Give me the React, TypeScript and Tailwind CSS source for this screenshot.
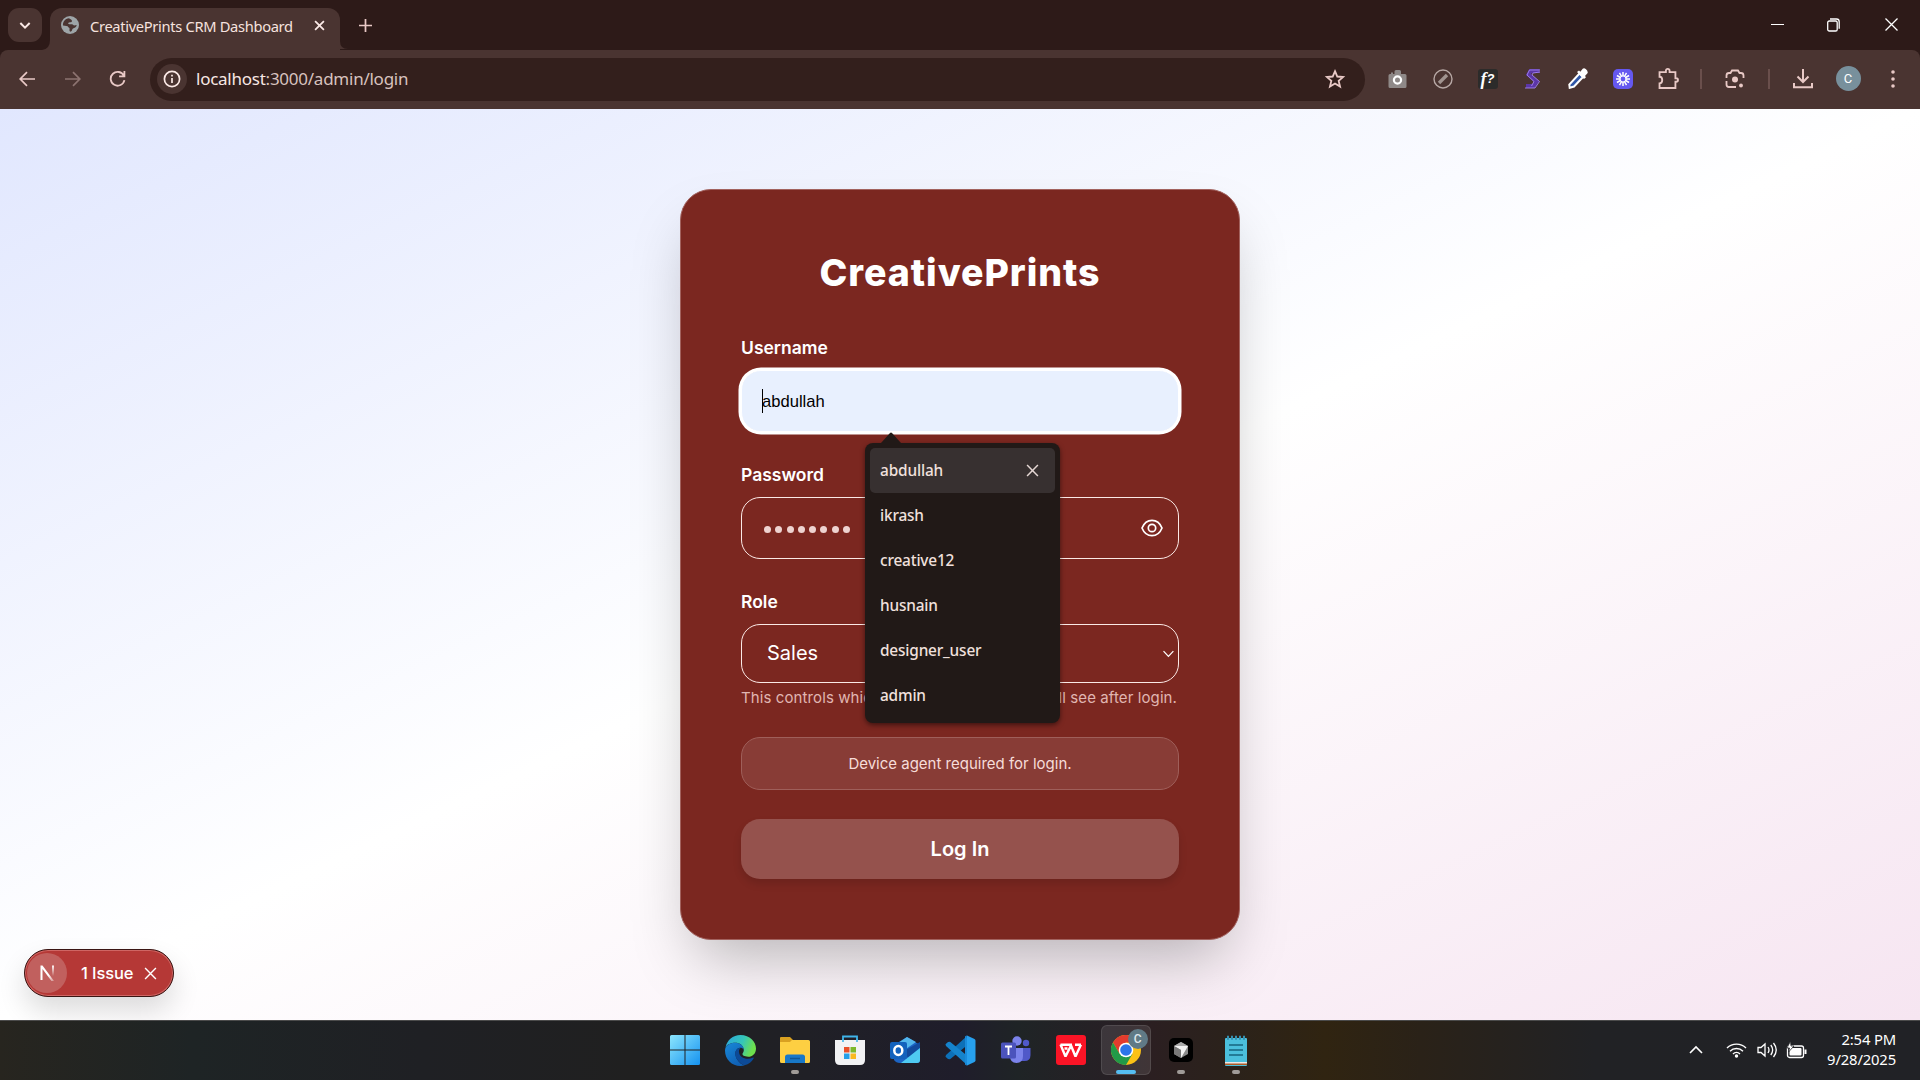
import React from "react";

const ui = "font-['Noto_Sans','Open_Sans',sans-serif]";

function Line({ d, size = 20, sw = 2, color = "#e9c9c6", vb = "0 0 24 24" }: { d: string; size?: number; sw?: number; color?: string; vb?: string }) {
  return (
    <svg width={size} height={size} viewBox={vb} fill="none" stroke={color} strokeWidth={sw} className="block shrink-0">
      <path d={d} />
    </svg>
  );
}

function Cell({ w, children }: { w: string; children?: React.ReactNode }) {
  return <div className={`flex h-full shrink-0 items-center justify-center ${w}`}>{children}</div>;
}

function TabStrip() {
  return (
    <div className="flex h-[50px] items-start bg-[#2d1a18]">
      <div className="ml-2 mt-2 flex h-[34px] w-[34px] items-center justify-center rounded-[11px] bg-[#4a3431]">
        <Line d="M5 9l7 7 7-7" size={16} sw={3} color="#fbe9e6" />
      </div>
      <div className="mt-2 flex h-[42px] w-2 items-end">
        <svg width="8" height="10" viewBox="0 0 8 10" className="block"><path d="M8 0v10H0Q8 9 8 0z" fill="#4a3431" /></svg>
      </div>
      <div className="mt-2 flex h-[42px] w-[290px] items-center rounded-t-[12px] bg-[#4a3431] pl-[11px]">
        <svg width="18" height="18" viewBox="0 0 18 18" className="-mt-2 block shrink-0">
          <circle cx="9" cy="9" r="9" fill="#9ea5a8" />
          <path d="M8 2.2C4 2.5 1.600 6 2 9.500l3.500.5c2 0 1.500 1.700 3 2v2.500c0 1 1 1.400 1.500 1 1.500-1 1-2.500 2-3 1.200-.5 3.500-1 3.700-3.500L13 9.500c-1-1-2-1.500-4-1.200C7 8.500 6.500 7 8 6.500s3 0 3-1.500S9.500 3.500 8 2.200z" fill="#4a3431" />
        </svg>
        <span className={`${ui} ml-[11px] mt-[-7px] w-[218px] shrink-0 whitespace-nowrap text-[14.700px] leading-5 tracking-[-0.33px] text-[#f6e2df]`}>CreativePrints CRM Dashboard</span>
        <div className="-mt-2 ml-[6px]"><Line d="M1 1l8 8M9 1l-8 8" size={11} vb="0 0 10 10" sw={1.6} color="#fbe9e6" /></div>
      </div>
      <div className="flex h-[42px] w-2 items-end self-end">
        <svg width="10" height="10" viewBox="0 0 10 10" className="block"><path d="M0 0v10H10Q0 10 0 0z" fill="#4a3431" /></svg>
      </div>
      <div className="ml-[11px] mt-[19px]"><Line d="M6 0v12M0 6h12" size={13} vb="0 0 12 12" sw={1.6} /></div>
      <div className="ml-auto flex h-[49px]">
        <Cell w="w-14"><div className="h-px w-[13px] bg-white" /></Cell>
        <Cell w="w-[57px]">
          <svg width="13" height="14" viewBox="0 0 13 14" fill="none" stroke="#fff" strokeWidth="1.300" className="block"><rect x=".7" y="3" width="9.500" height="10" rx="1.600" /><path d="M3 1h6.500a2.700 2.700 0 0 1 2.700 2.700v7" /></svg>
        </Cell>
        <Cell w="w-[58px]"><Line d="M.5 .5l12 12M12.500 .5l-12 12" size={13} vb="0 0 13 13" sw={1.3} color="#fff" /></Cell>
      </div>
    </div>
  );
}

function Toolbar() {
  return (
    <div className="bg-[#2d1a18]">
      <div className="flex h-[59px] items-center rounded-t-[8px] bg-[#4a3431] pb-px">
        <div className="flex h-full w-[150px] shrink-0 items-center pb-px pl-1">
          <Cell w="w-[46px]"><Line d="M16 8H1.500M8 1.200L1.200 8 8 14.800" size={16} vb="0 0 16 16" sw={1.7} /></Cell>
          <Cell w="w-[45px]"><Line d="M0 8h14.500M8 1.200L14.800 8 8 14.800" size={16} vb="0 0 16 16" sw={1.7} color="#8c7370" /></Cell>
          <Cell w="w-[45px]"><Line d="M14 5.500A6.500 6.500 0 1 0 14.500 9.500M14.500 1v5H9.500" size={17} vb="0 0 16 16" sw={1.7} /></Cell>
        </div>
        <div className="flex h-[43px] w-[1215px] shrink-0 items-center rounded-full bg-[#331f1c] pb-px pl-[7px]">
          <div className="flex h-[30px] w-[30px] items-center justify-center rounded-full bg-[#4a3431]">
            <svg width="18" height="18" viewBox="0 0 18 18" fill="none" className="block"><circle cx="9" cy="9" r="7.600" stroke="#fbe9e6" strokeWidth="1.700" /><path d="M9 8v5M9 4.700v1.800" stroke="#fbe9e6" strokeWidth="1.700" /></svg>
          </div>
          <span className={`${ui} ml-[9px] whitespace-nowrap text-[17px] tracking-[-0.25px] text-[#d8c2bf]`}><span className="text-[#f8e7e4]">localhost</span>:3000/admin/login</span>
          <div className="ml-auto mr-[19px]"><Line d="M12 3.500l2.500 5.800 6.300.6-4.800 4.200 1.500 6.200L12 17 6.500 20.300 8 14.100 3.200 9.900l6.300-.6z" size={22} sw={2} /></div>
        </div>
        <div className="ml-[9px] flex h-full items-center pb-px">
          <Cell w="w-[46px]">
            <svg width="19" height="20" viewBox="0 0 19 20" className="block"><path d="M2 5h1V3.500h2V5h1.500V2.500Q6.500 1 8 1h3.500Q13 1 13 2.500V5h4q1.500 0 1.500 1.500v11Q18.500 19 17 19H2Q.5 19 .5 17.500v-11Q.5 5 2 5z" fill="#8f8988" /><circle cx="9.500" cy="11" r="3.600" fill="none" stroke="#fff" strokeWidth="2.200" /></svg>
          </Cell>
          <Cell w="w-[45px]">
            <svg width="20" height="20" viewBox="0 0 20 20" className="block"><circle cx="10" cy="10" r="9" fill="none" stroke="#b7a8a5" strokeWidth="1.400" /><path d="M6 14L14 6" stroke="#a19490" strokeWidth="3.300" /></svg>
          </Cell>
          <Cell w="w-[45px]">
            <span className="flex h-[20px] w-[20px] items-center justify-center rounded-[3px] bg-[#2c2b2a] font-['Liberation_Serif',serif] text-[18px] font-bold italic leading-none text-white">f<span className="font-['Liberation_Sans',sans-serif] text-[13px]">?</span></span>
          </Cell>
          <Cell w="w-[45px]">
            <svg width="18" height="20" viewBox="0 0 18 20" fill="none" className="block"><path d="M15.500 2H6.500L4.500 5.500l8 7-3 4.500H2" stroke="#5b36a8" strokeWidth="4" /><path d="M16 1H5.500L3 6l7 6.500L7.500 17M16 3L9 4l-1 2 7.500 6.500L11 19H1" stroke="#a483ee" strokeWidth=".9" /></svg>
          </Cell>
          <Cell w="w-[45px]">
            <svg width="20" height="21" viewBox="0 0 20 21" className="block"><path d="M11.500 5.500L15 9 6 18.500l-4.300 1.300L1.300 16.500z" fill="#2f57a8" stroke="#fff" strokeWidth="2" /><path d="M9 4l7 7 2-1.700-1-1.300 2.700-3Q20 3 18 1.200T14.700.8L12.300 3.800 11 2.500z" fill="#fff" /></svg>
          </Cell>
          <Cell w="w-[45px]">
            <span className="flex h-5 w-5 items-center justify-center rounded-[5px] bg-[#6558f0]">
              <svg width="16" height="16" viewBox="-8 -8 16 16" className="block">
                {[0, 30, 60, 90, 120, 150, 180, 210, 240, 270, 300, 330].map((a) => <path key={a} d="M0-3v-4" stroke="#fff" strokeWidth="1.500" transform={`rotate(${a})`} />)}
                <circle r="3" fill="none" stroke="#fff" strokeWidth="1.200" />
              </svg>
            </span>
          </Cell>
          <Cell w="w-[46px]"><Line d="M1.500 3.500h6.200V2.200a1.800 1.800 0 0 1 3.600 0V3.500H17v6h.8a1.700 1.700 0 0 1 0 3.400H17V19H1.500v-4.500c3.500 0 3.500-6.500 0-6.500z" size={21} vb="0 -.5 20.500 20.500" sw={1.8} /></Cell>
          <Cell w="w-[19px]"><div className="h-5 w-[2px] bg-[#6a4f4c]" /></Cell>
          <Cell w="w-[50px]">
            <svg width="20" height="20" viewBox="0 0 20 20" fill="none" stroke="#e9c9c6" strokeWidth="1.800" className="block"><path d="M1.500 9V6.500q0-2.500 2.500-2.500h1.500L7 1.500h6L14.500 4H16q2.500 0 2.500 2.500V9M1.500 12v3.500Q1.500 18 4 18h7" /><circle cx="10" cy="10.500" r="3" fill="#e9c9c6" stroke="none" /><circle cx="16" cy="16.500" r="1.900" fill="#e9c9c6" stroke="none" /></svg>
          </Cell>
          <Cell w="w-[18px]"><div className="h-5 w-[2px] bg-[#6a4f4c]" /></Cell>
          <Cell w="w-[50px]"><Line d="M10 0v12.500M4.500 7.500L10 13l5.500-5.500M1 14v4.200h18V14" size={20} vb="0 0 20 20" sw={2} /></Cell>
          <Cell w="w-[40px]"><span className="flex h-[25px] w-[25px] items-center justify-center rounded-full bg-[#78909c] font-[Roboto,sans-serif] text-[13px] text-white">C</span></Cell>
          <Cell w="w-[50px]">
            <svg width="4" height="20" viewBox="0 0 4 20" fill="#e9c9c6" className="block"><circle cx="2" cy="3" r="1.800" /><circle cx="2" cy="10" r="1.800" /><circle cx="2" cy="17" r="1.800" /></svg>
          </Cell>
        </div>
      </div>
    </div>
  );
}

const suggestions = ["ikrash", "creative12", "husnain", "designer_user", "admin"];

function SuggestionPopup() {
  return (
    <div className={`${ui} absolute left-[123px] top-[61px] z-10 w-[195px]`}>
      <svg width="20" height="11" viewBox="0 0 20 11" className="ml-4 block"><path d="M0 11L9 1q1-1 2 0l9 10z" fill="#211917" /></svg>
      <div className="h-[280px] rounded-[8px] bg-[#211917] px-[5px] pt-[5px] text-[15.400px] font-medium text-[#f0e0dd] shadow-[0_2px_5px_rgba(0,0,0,0.5)]">
        <div className="flex h-[45px] items-center justify-between rounded-[5px] bg-[#373030] pl-[10px] pr-[16px]">
          <span className="tracking-[-0.15px]">abdullah</span>
          <Line d="M1 1l10 10M11 1L1 11" size={13} vb="0 0 12 12" sw={1.4} color="#e4d6d3" />
        </div>
        {suggestions.map((s) => (
          <div key={s} className="flex h-[45px] items-center pl-[10px] pt-px tracking-[-0.18px]">{s}</div>
        ))}
      </div>
    </div>
  );
}

function LoginCard() {
  return (
    <div className="flex h-[751px] w-[560px] flex-col rounded-[31px] border border-[#a2625e] bg-[#7b2720] px-[60px] pt-[60px] font-[Inter,sans-serif] text-white shadow-[0_31px_62px_-15px_rgba(0,0,0,0.28)]">
      <h1 className="h-[45px] text-center text-[37.500px] font-extrabold leading-[45px] tracking-[0.94px]">CreativePrints</h1>
      <label className="mt-[40px] h-[25px] text-[17.500px] font-semibold leading-[25px]">Username</label>
      <div className="relative mt-[10px] flex h-[62px] items-center rounded-[20px] border border-white bg-[#e8f0fe] pl-[20px] shadow-[0_0_0_2.500px_#fff]">
        <div className="h-6 w-px bg-black" />
        <span className="-ml-px mt-[3px] font-['Liberation_Sans',sans-serif] text-[16.600px] text-black">abdullah</span>
        <SuggestionPopup />
      </div>
      <label className="mt-[30px] h-[25px] text-[17.500px] font-semibold leading-[25px]">Password</label>
      <div className="mt-[10px] flex h-[62px] items-center rounded-[19px] border border-[#fbe9e6] pl-[22px] pr-[15px]">
        <div className="mt-[3px] flex gap-[4.300px]">
          {[0, 1, 2, 3, 4, 5, 6, 7].map((i) => <span key={i} className="h-[7px] w-[7px] rounded-full bg-[#eed3d0]" />)}
        </div>
        <svg width="22" height="20" viewBox="0 0 22 20" fill="none" stroke="#fff" strokeWidth="1.700" className="ml-auto block"><path d="M1 10C3 5 6.500 2.300 11 2.300S19 5 21 10c-2 5-5.500 7.700-10 7.700S3 15 1 10z" /><circle cx="11" cy="10" r="3.700" /></svg>
      </div>
      <label className="mt-[30px] h-[25px] text-[17.500px] font-semibold leading-[25px]">Role</label>
      <div className="mt-[10px] flex h-[59px] items-center rounded-[19px] border border-b-[1.500px] border-[#fbe9e6] pb-px pl-[25px] pr-[4px] text-[20px]">
        Sales
        <div className="ml-auto"><Line d="M.5 1l4.700 5 4.700-5" size={11} vb="0 -2 10.500 10.500" sw={1.2} color="#fff" /></div>
      </div>
      <p className="mt-[5px] flex h-5 w-[436px] justify-between whitespace-nowrap text-[15px] leading-5 tracking-[0.1px] text-[#e0b6b2]">
        <span>This controls which dashboard section</span>
        <span>you&rsquo;ll see after login.</span>
      </p>
      <div className="mt-[29px] flex h-[53px] items-center justify-center rounded-[19px] border border-[#9f5f5a] bg-[#883c36] pt-px text-[15px] text-[#f6dcd9]">Device agent required for login.</div>
      <button className="mt-[29px] flex h-[60px] items-center justify-center rounded-[19px] bg-[#95524d] text-[20px] font-semibold shadow-[0_5px_8px_rgba(0,0,0,0.12)]">Log In</button>
    </div>
  );
}

function IssueBadge() {
  return (
    <div className="absolute left-6 top-[840px] flex h-12 w-[150px] items-center rounded-full border-[1.500px] border-[#3a1513] bg-[#b53836] pl-[2px] shadow-[inset_0_0_0_1px_#cf6664,0_14px_28px_rgba(0,0,0,0.14)]">
      <span className="flex h-10 w-10 items-center justify-center rounded-full bg-[#c1605e]">
        <svg width="18" height="18" viewBox="0 0 18 18" fill="none" className="block">
          <defs>
            <linearGradient id="nd" x1="0" y1="0" x2="1" y2="1"><stop offset=".6" stopColor="#fff" /><stop offset="1" stopColor="#fff" stopOpacity=".3" /></linearGradient>
            <linearGradient id="nv" gradientUnits="userSpaceOnUse" x1="0" y1="1" x2="0" y2="12"><stop stopColor="#fff" /><stop offset="1" stopColor="#fff" stopOpacity="0" /></linearGradient>
          </defs>
          <path d="M2.500 16V1.500h2L16 17h-2.500L4.500 5v11z" fill="url(#nd)" />
          <path d="M14 1.500h2v10.500h-2z" fill="url(#nv)" />
        </svg>
      </span>
      <span className="ml-[14px] w-[63px] whitespace-nowrap font-[Inter,sans-serif] text-[16.500px] font-medium tracking-[-0.1px] text-white">1 Issue</span>
      <Line d="M1 1l10 10M11 1L1 11" size={13} vb="0 0 12 12" sw={1.3} color="#fff" />
    </div>
  );
}

function TaskItem({ children, pill, active }: { children: React.ReactNode; pill?: boolean; active?: boolean }) {
  return (
    <div className={`relative flex h-[50px] w-[50px] items-center justify-center rounded-[6px] ${active ? "border border-white/10 bg-white/10" : ""}`}>
      {children}
      {pill && <span className="absolute bottom-[1px] left-[21px] h-1 w-2 rounded-full bg-[#a09b98]" />}
      {active && <span className="absolute bottom-0 left-[14px] h-1 w-5 rounded-full bg-[#55bdf2]" />}
    </div>
  );
}

function Taskbar() {
  return (
    <div className="flex h-[60px] items-center border-t border-[#4b4b4b] bg-[linear-gradient(90deg,#27251f_0%,#1e2425_10%,#1f2024_22%,#202020_33%,#202026_42%,#1f1d2b_50%,#1f2426_53%,#272025_58%,#2b1f21_60%,#2b221b_64%,#302411_69%,#2a2218_74%,#212225_83%,#212226_100%)] pb-px text-white">
      <div className="ml-[660px] flex gap-[5.100px]">
        <TaskItem>
          <svg width="30" height="30" viewBox="0 0 30 30" className="block"><defs><linearGradient id="win" x1="0" y1="0" x2="1" y2="1"><stop stopColor="#8ce6fd" /><stop offset="1" stopColor="#1592f0" /></linearGradient></defs><path d="M1.500 0H14.500V14.500H0V1.500Q0 0 1.500 0zM15.500 0H28.500Q30 0 30 1.500V14.500H15.500zM0 15.500H14.500V30H1.500Q0 30 0 28.500zM15.500 15.500H30V28.500Q30 30 28.500 30H15.500z" fill="url(#win)" /></svg>
        </TaskItem>
        <TaskItem>
          <svg width="31" height="31" viewBox="0 0 30 30" className="block">
            <defs>
              <linearGradient id="eg1" x1="0" y1="0" x2="1" y2=".3"><stop stopColor="#2ba6e0" /><stop offset=".6" stopColor="#35c6b8" /><stop offset="1" stopColor="#6ee04d" /></linearGradient>
              <linearGradient id="eg2" x1="0" y1="0" x2=".6" y2="1"><stop stopColor="#1989d8" /><stop offset="1" stopColor="#0f5fb4" /></linearGradient>
            </defs>
            <path d="M.5 12C2 5 7.500 0 15 0c9 0 15 6.500 15 13 0 5-3.500 8-7.500 8-4 0-6-1.500-5.500-3 .3-1 1.200-1.500 1.200-3.500C18 10 14 7.500 10 7.500 6 7.500 2 9 .5 12z" fill="url(#eg1)" />
            <path d="M0 15C0 10 5 7.500 10 7.500c4.500 0 8 3 8.200 6.500-1-1.500-3-2-4.700-1.500C9 14 9.500 20 12 24c1.500 2.500 4 4.500 7 5.300-1.300.5-2.600.7-4 .7C6.500 30 0 23.500 0 15z" fill="url(#eg2)" />
            <path d="M13.500 12.500C9 14 9 20 12 24c2 3 5 5 7 5.300 4-1 7-3.500 8.700-6.600.4-.8-.3-1-1-.7-5 2.500-13 .5-13.200-6 0-1.500.5-2.700 1.500-3.500z" fill="#0c4a97" />
          </svg>
        </TaskItem>
        <TaskItem pill>
          <svg width="30" height="28" viewBox="0 0 30 28" className="block"><path d="M0 2Q0 1 1 1h9l3 3v6H0z" fill="#d9a121" /><path d="M0 6h10l2-2h16.500Q30 4 30 5.500v20q0 1.500-1.500 1.500h-27Q0 27 0 25.500z" fill="#fdcf42" /><path d="M5 27v-6q0-2.500 2.500-2.500h15Q25 18.500 25 21v6z" fill="#1878c8" /><path d="M10 22.500h10" stroke="#0f5796" strokeWidth="1.500" /></svg>
        </TaskItem>
        <TaskItem>
          <svg width="30" height="31" viewBox="0 0 30 31" className="block"><path d="M8 7V1.500h14V7" fill="none" stroke="#3fb4e9" strokeWidth="1.800" /><path d="M0 5h30v20q0 5-5 5H5q-5 0-5-5z" fill="#f2f2f4" /><path d="M8 4v3M22 4v3" stroke="#3fb4e9" strokeWidth="1.600" /><path d="M9 12h5.500v5.500H9z" fill="#e8502a" /><path d="M15.500 12H21v5.500h-5.500z" fill="#7db82b" /><path d="M9 18.500h5.500V24H9z" fill="#26a0ea" /><path d="M15.500 18.500H21V24h-5.500z" fill="#f9b91f" /></svg>
        </TaskItem>
        <TaskItem>
          <svg width="31" height="28" viewBox="0 0 31 28" className="block"><path d="M4 9L17 1l13 8v15q0 3-3 3H10q-4 0-6-3z" fill="#1c64c4" /><path d="M5 9L17 1l9 5-13 9z" fill="#52b6ec" /><path d="M14 15L30 6v6L18 22z" fill="#124a9c" /><path d="M11 27l19-15v12q0 3-3 3z" fill="#4fcaf2" /><rect y="6" width="17" height="17" rx="2" fill="#1362bd" /><ellipse cx="8.300" cy="14.500" rx="4" ry="4.500" fill="none" stroke="#fff" strokeWidth="2.500" /></svg>
        </TaskItem>
        <TaskItem>
          <svg width="31" height="31" viewBox="0 0 31 31" className="block"><path d="M22 1L1 20l-.5 1.800L3 24l2 .2L22.500 10z" fill="#0d70b8" /><path d="M22 30L1 11 .5 9.200 3 7l2-.2L22.500 21z" fill="#1583cc" /><path d="M22 .5l7.500 3.600q1 .5 1 1.700v19.400q0 1.200-1 1.700L22 30.500z" fill="#27a0ee" /><path d="M22 .5q-1 2 0 3v24q-.8 1.500 0 3-1 0-2-1V1.500q1-1 2-1z" fill="#1a8bdb" /></svg>
        </TaskItem>
        <TaskItem>
          <svg width="30" height="28" viewBox="0 0 30 28" className="block"><circle cx="16" cy="5" r="4.700" fill="#7b83eb" /><circle cx="25" cy="7" r="3.200" fill="#5059c9" /><path d="M20 12h9.500v7q0 6-6 6H20z" fill="#5059c9" /><path d="M9 12h13v8q0 7-6.500 7T9 20z" fill="#7b83eb" /><rect y="6.500" width="15" height="16" rx="1.500" fill="#4b53bc" /><path d="M4 10.500h7M7.500 10.500V19" stroke="#fff" strokeWidth="1.800" /></svg>
        </TaskItem>
        <TaskItem>
          <svg width="30" height="30" viewBox="0 0 30 30" className="block"><rect width="30" height="30" rx="3" fill="#fb1426" /><path d="M4.500 9.500L9.500 21.500 15 10.500 19.500 21.500 25 9.500M4.500 9.700H16M19 9.700h6M8.500 13.500h3" fill="none" stroke="#fff" strokeWidth="2.400" strokeLinejoin="bevel" /></svg>
        </TaskItem>
        <TaskItem active>
          <svg width="30" height="30" viewBox="0 0 30 30" className="block"><circle cx="15" cy="15" r="15" fill="#fbc116" /><path d="M2 7.500A15 15 0 0 1 28 7.500H15L8.500 18.700z" fill="#e33b2e" /><path d="M2 7.500A15 15 0 0 0 15 30L21.500 18.700H8.500z" fill="#229a48" /><circle cx="15" cy="15" r="7.300" fill="#fff" /><circle cx="15" cy="15" r="5.800" fill="#2b75e8" /></svg>
          <span className="absolute left-[26px] top-[3px] flex h-5 w-5 items-center justify-center rounded-full bg-[#607a86] font-[Roboto,sans-serif] text-[12px] font-medium text-[#dfe8ec]">C</span>
        </TaskItem>
        <TaskItem pill>
          <svg width="24" height="24" viewBox="0 0 24 24" className="block"><rect width="24" height="24" rx="5" fill="#000" /><path d="M12 4l7 4v8l-7 4-7-4V8z" fill="#8b8b8b" /><path d="M5 8h14l-7 12v-8z" fill="#f3f3f3" /><path d="M5 8l7 4v8l-7-4z" fill="#777" /><path d="M5 8l7-4 7 4z" fill="#aaa" /></svg>
        </TaskItem>
        <TaskItem pill>
          <svg width="24" height="31" viewBox="0 0 24 31" className="block"><rect x="1" y="3" width="22" height="28" rx="1" fill="#4bbfdc" /><path d="M1 27h22v3H1z" fill="#ad5b26" /><path d="M1 27h22v1.500H1z" fill="#e8e8e8" /><path d="M4 .8v4M8 .8v4M12 .8v4M16 .8v4M20 .8v4" stroke="#3590b0" strokeWidth="2" /><path d="M5 10h14M5 15h14M5 20h14" stroke="#17657f" strokeWidth="1.500" /></svg>
        </TaskItem>
      </div>
      <div className={`${ui} ml-auto flex items-center pr-[24px]`}>
        <Line d="M1 8l6-6 6 6" size={14} vb="0 -2 14 14" sw={1.6} color="#fff" />
        <svg width="21" height="16" viewBox="0 0 21 16" fill="none" stroke="#fff" strokeWidth="1.400" className="ml-[23px] block"><path d="M1 6a13.500 13.500 0 0 1 19 0M4 9.200a9.200 9.200 0 0 1 13 0M7 12a5 5 0 0 1 7 0" /><circle cx="10.500" cy="14" r="1" fill="#fff" /></svg>
        <svg width="21" height="18" viewBox="0 0 21 18" fill="none" stroke="#fff" strokeWidth="1.300" className="ml-[10px] block"><path d="M1 6.500h3L8 3v12l-4-3.500H1zM11 6q2 3 0 6M13.800 4q3.700 5 0 10M16.500 2q5.500 7 0 14" /></svg>
        <svg width="21" height="18" viewBox="0 0 21 18" className="ml-[8px] block"><rect x="1.500" y="5" width="16" height="11.500" rx="2" fill="none" stroke="#fff" strokeWidth="1.300" /><rect x="3.500" y="7" width="12" height="7.500" rx="1" fill="#fff" /><path d="M18.500 8.500H20.500v4.500h-2z" fill="#fff" /><path d="M4.500 0L1 7h2.500L2.500 11 8 5H5z" fill="#fff" stroke="#212226" strokeWidth=".8" /></svg>
        <div className="mb-[2px] w-[89px] whitespace-nowrap text-right text-[14.800px] leading-5 tracking-[-0.15px]">
          <div>2:54 PM</div>
          <div>9/28/2025</div>
        </div>
      </div>
    </div>
  );
}

export default function App() {
  return (
    <div className="flex h-[1080px] w-[1920px] flex-col overflow-hidden">
      <TabStrip />
      <Toolbar />
      <main className="relative flex h-[911px] items-start justify-center overflow-hidden bg-[linear-gradient(to_bottom_right,#e1e7fe,#ffffff_50%,#f6e5f1)] pt-20">
        <LoginCard />
        <IssueBadge />
      </main>
      <Taskbar />
    </div>
  );
}
